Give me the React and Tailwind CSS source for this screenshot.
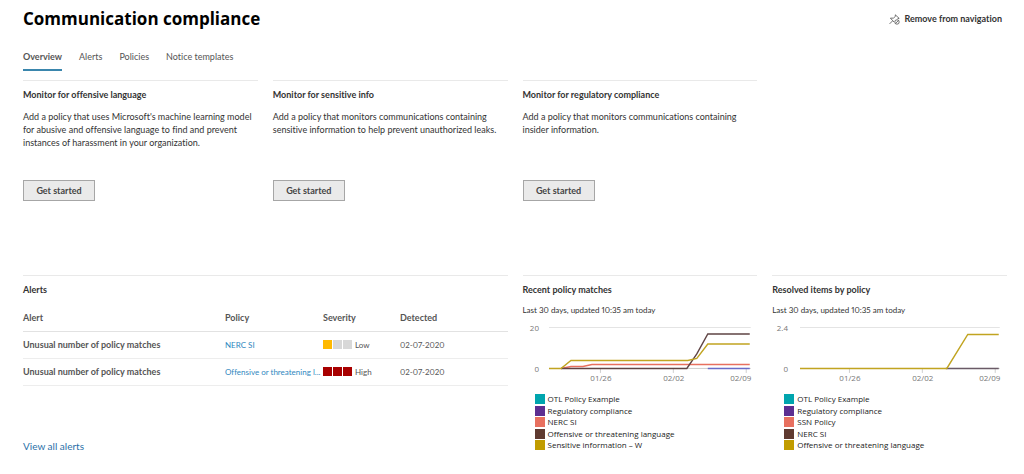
import clsx from "clsx";

const TABS = ["Overview", "Alerts", "Policies", "Notice templates"];

const PROMOS = [
  {
    title: "Monitor for offensive language",
    text: "Add a policy that uses Microsoft's machine learning model for abusive and offensive language to find and prevent instances of harassment in your organization.",
  },
  {
    title: "Monitor for sensitive info",
    text: "Add a policy that monitors communications containing sensitive information to help prevent unauthorized leaks.",
  },
  {
    title: "Monitor for regulatory compliance",
    text: "Add a policy that monitors communications containing insider information.",
  },
];

const ALERTS = [
  { id: 1, name: "Unusual number of policy matches", policy: "NERC SI", severity: "Low", detected: "02-07-2020" },
  { id: 2, name: "Unusual number of policy matches", policy: "Offensive or threatening l...", severity: "High", detected: "02-07-2020" },
];

const SEVERITY = {
  Low: ["bg-[#ffb900]", "bg-[#d8d8d8]", "bg-[#d8d8d8]"],
  High: ["bg-[#a80000]", "bg-[#a80000]", "bg-[#a80000]"],
};

const SWATCHES = ["bg-[#00a5ae]", "bg-[#5c2e91]", "bg-[#e8705f]", "bg-[#5f3a30]", "bg-[#c19c00]"];

const MATCHES = {
  title: "Recent policy matches",
  max: "20",
  start: 26,
  lines: [
    { color: "#6b6bc8", points: "185,48.5 227,48.5" },
    { color: "#e8705f", points: "38,48.5 48,46.5 60,46.5 69,44.5 227,44.5" },
    { color: "#5f4444", points: "38,48.5 164,48.5 174,34 185,14 227,14" },
    { color: "#c1a420", points: "26,48.5 38,48.5 48,40.5 165,40.5 174,38.5 185,24 227,24" },
  ],
  legend: ["OTL Policy Example", "Regulatory compliance", "NERC SI", "Offensive or threatening language", "Sensitive information – W"],
};

const RESOLVED = {
  title: "Resolved items by policy",
  max: "2.4",
  start: 28,
  lines: [
    { color: "#6a5a66", points: "174,48.5 227,48.5" },
    { color: "#c1a420", points: "28,48.5 175,48.5 196,14.5 227,14.5" },
  ],
  legend: ["OTL Policy Example", "Regulatory compliance", "SSN Policy", "NERC SI", "Offensive or threatening language"],
};

function UnpinIcon() {
  return (
    <svg viewBox="0 0 20 20" className="size-[11px]" fill="none" stroke="#555" strokeWidth="1.5" aria-hidden="true">
      <path d="M1 18 6.500 12.500M2.500 7.500 9 14.500M2.500 7.500 8 7.500 11.500 4.500 11.500 1.500 18.500 8 15.500 8.500" />
      <circle cx="14.500" cy="14.500" r="4" />
      <path d="M11.700 17.300 17.300 11.700" />
    </svg>
  );
}

function Panel({ title, className, children }) {
  return (
    <section className={clsx("min-w-0 border-t border-[#e9e9e9] pt-2", className)}>
      <h2 className="text-[9px] leading-3 font-bold text-[#333]">{title}</h2>
      {children}
    </section>
  );
}

function PromoPanel({ title, text }) {
  return (
    <Panel title={title} className="flex min-h-[195px] flex-col items-start">
      <p className="mt-[9px] min-h-[70px] text-[9px] leading-[13px] text-[#333]">{text}</p>
      <button
        type="button"
        className="h-[21px] w-[72px] border border-[#a6a6a6] bg-[#eaeaea] text-[9px] font-bold text-[#444] hover:bg-[#dadada]"
      >
        Get started
      </button>
    </Panel>
  );
}

function AlertsTable() {
  return (
    <table className="mt-2 w-full table-fixed text-left text-[9px]">
      <thead>
        <tr className="h-[27px] border-b border-[#e2e2e2] text-[#555]">
          <th className="w-[202px] font-bold">Alert</th>
          <th className="w-[98px] font-bold">Policy</th>
          <th className="w-[77px] font-bold">Severity</th>
          <th className="font-bold">Detected</th>
        </tr>
      </thead>
      <tbody>
        {ALERTS.map((alert) => (
          <tr key={alert.id} className="h-[27px] border-b border-[#ededed] text-[#555]">
            <td className="font-bold">{alert.name}</td>
            <td className="text-[8px] whitespace-nowrap">
              <a href="#policy" className="text-[#2f87c0] hover:underline">{alert.policy}</a>
            </td>
            <td>
              <div className="flex items-center gap-px text-[8px]">
                {SEVERITY[alert.severity].map((color, i) => (
                  <span key={i} className={clsx("size-[9px]", color)} />
                ))}
                <span className="ml-0.5">{alert.severity}</span>
              </div>
            </td>
            <td className="text-[8px] proportional-nums">{alert.detected}</td>
          </tr>
        ))}
      </tbody>
    </table>
  );
}

function ChartPanel({ title, max, start, lines, legend }) {
  return (
    <Panel title={title}>
      <p className="mt-2 text-[8px] leading-3 text-[#333] proportional-nums">Last 30 days, updated 10:35 am today</p>
      <svg
        viewBox="0 0 235 66"
        className="mt-1 block w-full font-['Open_Sans','Noto_Sans',sans-serif]"
        role="img"
        aria-label={title}
      >
        <path d={`M${start} 7.500H228`} stroke="#e4e4e4" />
        <path d={`M${start} 48.500H228M77.500 49v4M150.500 49v4M223.500 49v4`} stroke="#cfcfcf" />
        {lines.map((line) => (
          <polyline key={line.color} points={line.points} fill="none" stroke={line.color} strokeWidth="1.400" />
        ))}
        <g fontSize="8" fill="#777">
          <text x="16" y="11" textAnchor="end">{max}</text>
          <text x="16" y="52" textAnchor="end">0</text>
          <g textAnchor="middle">
            <text x="78" y="61">01/26</text>
            <text x="151" y="61">02/02</text>
            <text x="218" y="61">02/09</text>
          </g>
        </g>
      </svg>
      <ul className="mt-2 ml-3 flex h-[57px] flex-col justify-between font-['Open_Sans','Noto_Sans',sans-serif] text-[8px] text-[#222]">
        {legend.map((name, i) => (
          <li key={name} className="flex h-[11px] items-center gap-[3px]">
            <span className={clsx("size-[10px]", SWATCHES[i])} />
            {name}
          </li>
        ))}
      </ul>
    </Panel>
  );
}

export default function App() {
  return (
    <div className="min-h-screen bg-white pr-[17px] pl-[23px] font-['Lato','Open_Sans',sans-serif] [font-variant-ligatures:none]">
      <header className="flex items-center justify-between pt-2">
        <h1 className="font-['Open_Sans','Noto_Sans',sans-serif] text-[17px] leading-[22px] font-bold text-black">
          Communication compliance
        </h1>
        <button type="button" className="flex items-center gap-1 pr-[5px] text-[9px] font-bold text-[#333]">
          <UnpinIcon />
          Remove from navigation
        </button>
      </header>

      <nav className="mt-[18px] flex gap-[17px] text-[9px] leading-[17px] text-[#555]">
        {TABS.map((tab, i) => (
          <a
            key={tab}
            href="#tab"
            className={clsx("border-b-2 pb-1", i === 0 ? "border-[#3a86ad] font-bold" : "border-transparent")}
          >
            {tab}
          </a>
        ))}
      </nav>

      <main className="mt-[9px] grid grid-cols-4 gap-x-[15px]">
        <div className="col-span-4 grid grid-cols-4 gap-x-[15px]">
          {PROMOS.map((promo) => (
            <PromoPanel key={promo.title} {...promo} />
          ))}
        </div>
        <Panel title="Alerts" className="col-span-2">
          <AlertsTable />
          <a href="#alerts" className="mt-[52px] inline-block text-[10px] leading-4 text-[#2a70a8] hover:underline">
            View all alerts
          </a>
        </Panel>
        <ChartPanel {...MATCHES} />
        <ChartPanel {...RESOLVED} />
      </main>
    </div>
  );
}
